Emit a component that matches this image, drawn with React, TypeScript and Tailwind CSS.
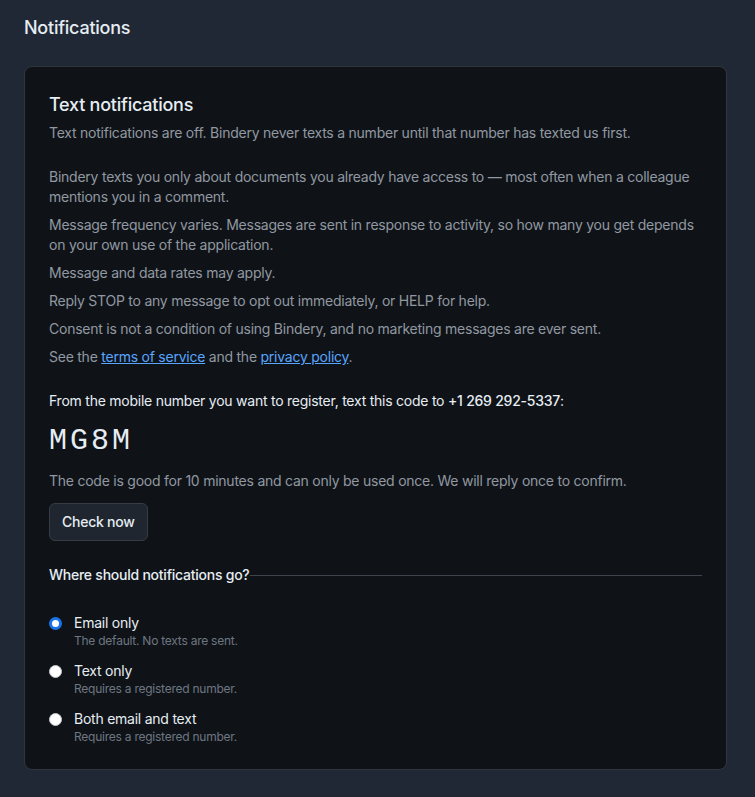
import { useState } from 'react';

const options = [
  { id: 'email', label: 'Email only', hint: 'The default. No texts are sent.' },
  { id: 'text', label: 'Text only', hint: 'Requires a registered number.' },
  { id: 'both', label: 'Both email and text', hint: 'Requires a registered number.' },
];

export default function App() {
  const [channel, setChannel] = useState('email');

  return (
    <div
      className="min-h-screen bg-[#202835] pt-[14px] pr-7 pb-7 pl-6 tracking-[-0.015em] text-[#e6edf3]"
      style={{ fontFamily: 'Inter, "Noto Sans", sans-serif' }}
    >
      <h1 className="text-lg leading-7 font-medium">Notifications</h1>

      <section className="mt-6 rounded-lg border border-[#30363d] bg-[#0f1318] p-6">
        <h2 className="text-lg leading-7 font-medium">Text notifications</h2>
        <p className="mt-1 text-sm leading-5 text-[#9198a1]">
          Text notifications are off. Bindery never texts a number until that number has texted us first.
        </p>

        <div className="mt-6 space-y-2 text-sm leading-5 text-[#9198a1]">
          <p>
            Bindery texts you only about documents you already have access to — most often when a colleague
            mentions you in a comment.
          </p>
          <p>
            Message frequency varies. Messages are sent in response to activity, so how many you get depends
            on your own use of the application.
          </p>
          <p>Message and data rates may apply.</p>
          <p>Reply STOP to any message to opt out immediately, or HELP for help.</p>
          <p>Consent is not a condition of using Bindery, and no marketing messages are ever sent.</p>
          <p>
            See the{' '}
            <a href="#" className="text-[#58a6ff] underline">
              terms of service
            </a>{' '}
            and the{' '}
            <a href="#" className="text-[#58a6ff] underline">
              privacy policy
            </a>
            .
          </p>
        </div>

        <p className="mt-6 text-sm leading-5">
          From the mobile number you want to register, text this code to{' '}
          <span className="font-medium">+1 269 292-5337</span>:
        </p>
        <div
          className="mt-3 text-3xl leading-9 tracking-widest"
          style={{ fontFamily: '"Liberation Mono", "DejaVu Sans Mono", monospace' }}
        >
          MG8M
        </div>
        <p className="mt-3 text-sm leading-5 text-[#9198a1]">
          The code is good for 10 minutes and can only be used once. We will reply once to confirm.
        </p>
        <button className="mt-3 rounded-md border border-[#363c45] bg-[#1f2630] px-3 py-2 text-sm leading-5 font-medium">
          Check now
        </button>

        <div className="mt-6">
          <div className="flex items-center">
            <span className="text-sm leading-5 font-medium">Where should notifications go?</span>
            <div className="h-px flex-1 bg-[#3d444d]" />
          </div>

          <div className="mt-7 space-y-3">
            {options.map((opt) => (
              <label key={opt.id} className="flex cursor-pointer items-start gap-3">
                <input
                  type="radio"
                  name="channel"
                  checked={channel === opt.id}
                  onChange={() => setChannel(opt.id)}
                  className="m-0 mt-[4px] h-[13px] w-[13px] shrink-0 appearance-none rounded-full border border-[#c4c8cc] bg-white checked:border-[3.5px] checked:border-[#1a73e8]"
                />
                <span>
                  <span className="block text-sm leading-5">{opt.label}</span>
                  <span className="block text-xs leading-4 text-[#6e7681]">{opt.hint}</span>
                </span>
              </label>
            ))}
          </div>
        </div>
      </section>
    </div>
  );
}
